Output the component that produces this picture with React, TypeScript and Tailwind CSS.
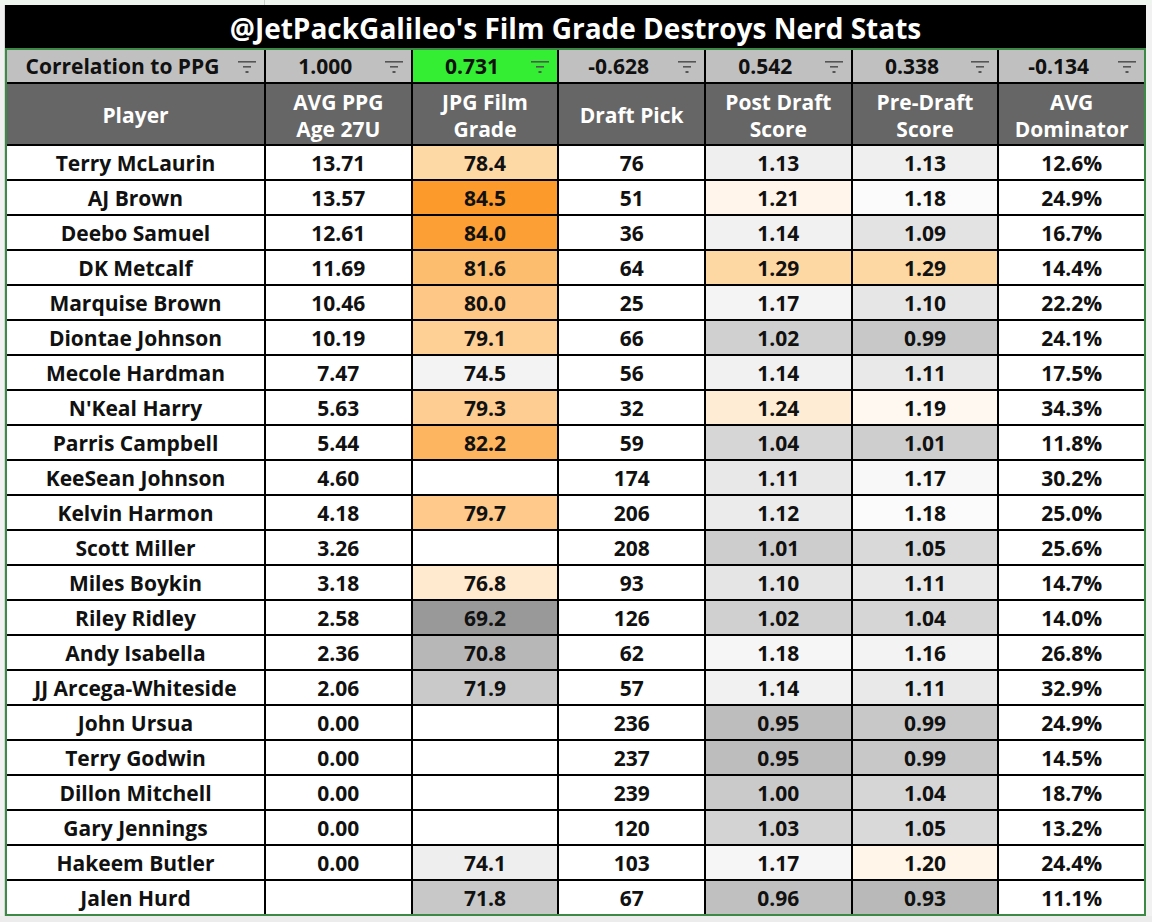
import React from 'react';

type Row = {
  name: string;
  ppg: string;
  grade: string;
  gradeBg: string;
  pick: string;
  post: string;
  postBg: string;
  pre: string;
  preBg: string;
  dom: string;
};

const rows: Row[] = [
  { name: 'Terry McLaurin', ppg: '13.71', grade: '78.4', gradeBg: 'bg-[#fdd9a6]', pick: '76', post: '1.13', postBg: 'bg-[#efefef]', pre: '1.13', preBg: 'bg-[#efefef]', dom: '12.6%' },
  { name: 'AJ Brown', ppg: '13.57', grade: '84.5', gradeBg: 'bg-[#fc9b2c]', pick: '51', post: '1.21', postBg: 'bg-[#fff5ea]', pre: '1.18', preBg: 'bg-[#fbfbfb]', dom: '24.9%' },
  { name: 'Deebo Samuel', ppg: '12.61', grade: '84.0', gradeBg: 'bg-[#fc9f34]', pick: '36', post: '1.14', postBg: 'bg-[#f1f1f1]', pre: '1.09', preBg: 'bg-[#e3e3e3]', dom: '16.7%' },
  { name: 'DK Metcalf', ppg: '11.69', grade: '81.6', gradeBg: 'bg-[#fdbd6e]', pick: '64', post: '1.29', postBg: 'bg-[#fed8a3]', pre: '1.29', preBg: 'bg-[#fed8a3]', dom: '14.4%' },
  { name: 'Marquise Brown', ppg: '10.46', grade: '80.0', gradeBg: 'bg-[#fec786]', pick: '25', post: '1.17', postBg: 'bg-[#f4f4f4]', pre: '1.10', preBg: 'bg-[#e6e6e6]', dom: '22.2%' },
  { name: 'Diontae Johnson', ppg: '10.19', grade: '79.1', gradeBg: 'bg-[#fed096]', pick: '66', post: '1.02', postBg: 'bg-[#d0d0d0]', pre: '0.99', preBg: 'bg-[#c8c8c8]', dom: '24.1%' },
  { name: 'Mecole Hardman', ppg: '7.47', grade: '74.5', gradeBg: 'bg-[#f3f3f3]', pick: '56', post: '1.14', postBg: 'bg-[#f1f1f1]', pre: '1.11', preBg: 'bg-[#e9e9e9]', dom: '17.5%' },
  { name: "N'Keal Harry", ppg: '5.63', grade: '79.3', gradeBg: 'bg-[#fecd91]', pick: '32', post: '1.24', postBg: 'bg-[#ffecd4]', pre: '1.19', preBg: 'bg-[#fff8f0]', dom: '34.3%' },
  { name: 'Parris Campbell', ppg: '5.44', grade: '82.2', gradeBg: 'bg-[#fdb55f]', pick: '59', post: '1.04', postBg: 'bg-[#d6d6d6]', pre: '1.01', preBg: 'bg-[#cecece]', dom: '11.8%' },
  { name: 'KeeSean Johnson', ppg: '4.60', grade: '', gradeBg: 'bg-white', pick: '174', post: '1.11', postBg: 'bg-[#e8e8e8]', pre: '1.17', preBg: 'bg-[#f8f8f8]', dom: '30.2%' },
  { name: 'Kelvin Harmon', ppg: '4.18', grade: '79.7', gradeBg: 'bg-[#fec98a]', pick: '206', post: '1.12', postBg: 'bg-[#ebebeb]', pre: '1.18', preBg: 'bg-[#fbfbfb]', dom: '25.0%' },
  { name: 'Scott Miller', ppg: '3.26', grade: '', gradeBg: 'bg-white', pick: '208', post: '1.01', postBg: 'bg-[#cdcdcd]', pre: '1.05', preBg: 'bg-[#d9d9d9]', dom: '25.6%' },
  { name: 'Miles Boykin', ppg: '3.18', grade: '76.8', gradeBg: 'bg-[#ffeacf]', pick: '93', post: '1.10', postBg: 'bg-[#e5e5e5]', pre: '1.11', preBg: 'bg-[#e9e9e9]', dom: '14.7%' },
  { name: 'Riley Ridley', ppg: '2.58', grade: '69.2', gradeBg: 'bg-[#999999]', pick: '126', post: '1.02', postBg: 'bg-[#d0d0d0]', pre: '1.04', preBg: 'bg-[#d6d6d6]', dom: '14.0%' },
  { name: 'Andy Isabella', ppg: '2.36', grade: '70.8', gradeBg: 'bg-[#b7b7b7]', pick: '62', post: '1.18', postBg: 'bg-[#f6f6f6]', pre: '1.16', preBg: 'bg-[#f3f3f3]', dom: '26.8%' },
  { name: 'JJ Arcega-Whiteside', ppg: '2.06', grade: '71.9', gradeBg: 'bg-[#c9c9c9]', pick: '57', post: '1.14', postBg: 'bg-[#f1f1f1]', pre: '1.11', preBg: 'bg-[#e9e9e9]', dom: '32.9%' },
  { name: 'John Ursua', ppg: '0.00', grade: '', gradeBg: 'bg-white', pick: '236', post: '0.95', postBg: 'bg-[#bdbdbd]', pre: '0.99', preBg: 'bg-[#c8c8c8]', dom: '24.9%' },
  { name: 'Terry Godwin', ppg: '0.00', grade: '', gradeBg: 'bg-white', pick: '237', post: '0.95', postBg: 'bg-[#bdbdbd]', pre: '0.99', preBg: 'bg-[#c8c8c8]', dom: '14.5%' },
  { name: 'Dillon Mitchell', ppg: '0.00', grade: '', gradeBg: 'bg-white', pick: '239', post: '1.00', postBg: 'bg-[#cacaca]', pre: '1.04', preBg: 'bg-[#d6d6d6]', dom: '18.7%' },
  { name: 'Gary Jennings', ppg: '0.00', grade: '', gradeBg: 'bg-white', pick: '120', post: '1.03', postBg: 'bg-[#d3d3d3]', pre: '1.05', preBg: 'bg-[#d9d9d9]', dom: '13.2%' },
  { name: 'Hakeem Butler', ppg: '0.00', grade: '74.1', gradeBg: 'bg-[#eeeeee]', pick: '103', post: '1.17', postBg: 'bg-[#f6f6f6]', pre: '1.20', preBg: 'bg-[#fff5e8]', dom: '24.4%' },
  { name: 'Jalen Hurd', ppg: '', grade: '71.8', gradeBg: 'bg-[#c8c8c8]', pick: '67', post: '0.96', postBg: 'bg-[#c0c0c0]', pre: '0.93', preBg: 'bg-[#b9b9b9]', dom: '11.1%' },
];

const correlations = [
  { label: 'Correlation to PPG', bg: 'bg-[#c0c0c0]' },
  { label: '1.000', bg: 'bg-[#c0c0c0]' },
  { label: '0.731', bg: 'bg-[#33ee33]' },
  { label: '-0.628', bg: 'bg-[#c0c0c0]' },
  { label: '0.542', bg: 'bg-[#c0c0c0]' },
  { label: '0.338', bg: 'bg-[#c0c0c0]' },
  { label: '-0.134', bg: 'bg-[#c0c0c0]' },
];

const headers = [
  ['Player'],
  ['AVG PPG', 'Age 27U'],
  ['JPG Film', 'Grade'],
  ['Draft Pick'],
  ['Post Draft', 'Score'],
  ['Pre-Draft', 'Score'],
  ['AVG', 'Dominator'],
];

const FilterIcon = () => (
  <svg width="18" height="12" viewBox="0 0 18 12" className="mr-2 shrink-0">
    <rect x="0" y="0" width="18" height="1.6" fill="#555" />
    <rect x="5" y="5" width="8" height="1.6" fill="#555" />
    <rect x="7.5" y="10" width="3" height="2" fill="#555" />
  </svg>
);

const Cell = ({ bg, children }: { bg: string; children: React.ReactNode }) => (
  <div className={`${bg} h-[33px] flex items-center justify-center pt-[3px]`}>{children}</div>
);

export default function App() {
  return (
    <div
      className="w-[1152px] h-[922px] overflow-hidden bg-[#ececec] text-[#111]"
      style={{ fontFamily: '"Open Sans", Roboto, "Liberation Sans", sans-serif' }}
    >
      {/* sheet row above */}
      <div className="h-[5px] bg-[#eef4ee] flex">
        <div className="w-[265px] border-r border-[#c8d0c8]" />
      </div>

      <div className="flex">
        <div className="w-[5px] bg-[#f1f1f1] border-r border-[#d6d6d6]" />

        <div className="w-[1141px]">
          {/* Title */}
          <div className="h-[43px] bg-black flex items-center justify-center pt-[2px]">
            <h1 className="text-white text-[28px] font-bold">
              @JetPackGalileo's Film Grade Destroys Nerd Stats
            </h1>
          </div>

          {/* Table */}
          <div className="border-2 border-[#3d8a47] bg-black">
            <div className="grid grid-cols-[257px_repeat(6,minmax(0,1fr))] gap-[2px] text-[21px] font-bold">
              {correlations.map((c, i) => (
                <div key={i} className={`${c.bg} h-[32px] flex items-center pt-[2px]`}>
                  <span className="flex-1 text-center">{c.label}</span>
                  <FilterIcon />
                </div>
              ))}

              {headers.map((h, i) => (
                <div
                  key={i}
                  className="bg-[#666666] h-[60px] flex flex-col items-center justify-center text-white leading-[27px] pt-[3px]"
                >
                  {h.map((line) => (
                    <span key={line}>{line}</span>
                  ))}
                </div>
              ))}

              {rows.map((r) => (
                <React.Fragment key={r.name}>
                  <Cell bg="bg-white">{r.name}</Cell>
                  <Cell bg="bg-white">{r.ppg}</Cell>
                  <Cell bg={r.gradeBg}>{r.grade}</Cell>
                  <Cell bg="bg-white">{r.pick}</Cell>
                  <Cell bg={r.postBg}>{r.post}</Cell>
                  <Cell bg={r.preBg}>{r.pre}</Cell>
                  <Cell bg="bg-white">{r.dom}</Cell>
                </React.Fragment>
              ))}
            </div>
          </div>
        </div>

        <div className="flex-1 bg-[#f1f1f1]" />
      </div>
    </div>
  );
}
